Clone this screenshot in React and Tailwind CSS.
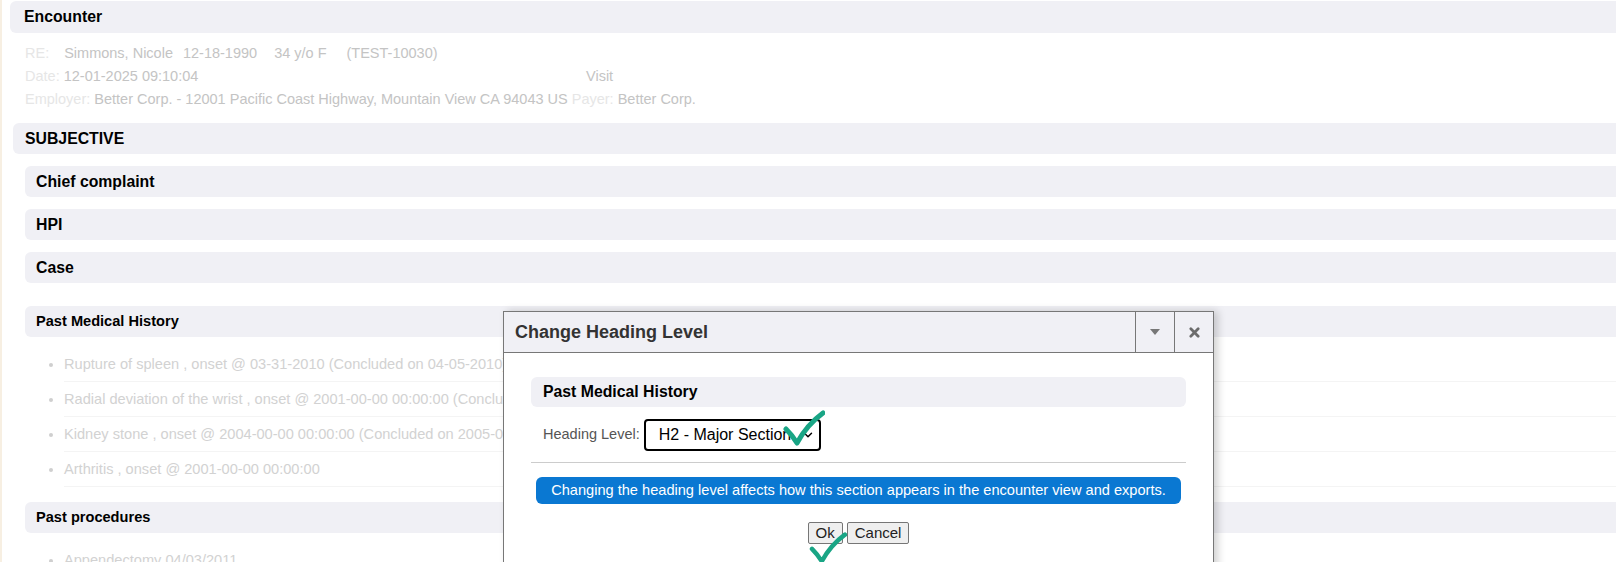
import { ChevronDown } from "lucide-react";

const pastHistory = [
  "Rupture of spleen , onset @ 03-31-2010 (Concluded on 04-05-2010)",
  "Radial deviation of the wrist , onset @ 2001-00-00 00:00:00 (Concluded on 2002-00-00 00:00:00)",
  "Kidney stone , onset @ 2004-00-00 00:00:00 (Concluded on 2005-00-00 00:00:00)",
  "Arthritis , onset @ 2001-00-00 00:00:00",
];

function Heading({ children, className = "" }) {
  return (
    <div
      className={`flex h-[31px] items-center rounded-l-md bg-[#f0f0f5] font-bold text-black ${className}`}
    >
      {children}
    </div>
  );
}

function Check({ className }) {
  return (
    <svg viewBox="0 0 42 36" className={className} fill="none">
      <path
        d="M3 19 C7 23 11 28 14 33 C20 22 29 11 40 3"
        stroke="#19a585"
        strokeWidth="5"
        strokeLinecap="round"
        strokeLinejoin="round"
      />
    </svg>
  );
}

function Dialog() {
  return (
    <div className="absolute left-[503px] top-[311px] h-[280px] w-[711px] border border-[#777] bg-white shadow-[4px_0_8px_rgba(0,0,0,0.18)]">
      <div className="flex h-[41px] items-stretch border-b border-[#777] bg-[#f0f0f5]">
        <div className="flex flex-1 items-center pl-[11px] text-[18px] font-bold text-[#333]">
          Change Heading Level
        </div>
        <div className="flex w-[39px] items-center justify-center border-l border-[#777]">
          <svg viewBox="0 0 10 6" className="h-[6px] w-[10px]">
            <path d="M0 0 H10 L5 6 Z" fill="#777" />
          </svg>
        </div>
        <div className="flex w-[39px] items-center justify-center border-l border-[#777]">
          <svg viewBox="0 0 12 12" className="h-[11px] w-[11px]">
            <path d="M2 2 L10 10 M10 2 L2 10" stroke="#6b6b6b" strokeWidth="3" strokeLinecap="round" />
          </svg>
        </div>
      </div>

      <div className="relative px-[27px] pt-[24px]">
        <div className="flex h-[30px] items-center rounded-md bg-[#f0f0f5] pl-3 text-[15.8px] font-bold text-black">
          Past Medical History
        </div>
        <div className="mt-[12px] flex items-center pl-3">
          <span className="text-[14.5px] text-[#555]">Heading Level:</span>
          <div className="ml-[4px] flex h-[32px] w-[177px] items-center justify-between rounded-[4px] border-2 border-black pl-[13px] pr-[4px] text-[16px] text-black">
            <span>H2 - Major Section</span>
            <ChevronDown size={14} strokeWidth={2.5} />
          </div>
        </div>
        <div className="mt-[11px] border-t border-[#ccc]" />
        <div className="mx-[5px] mt-[14px] flex h-[27px] items-center justify-center rounded-md bg-[#0a78d2] text-[14.6px] text-white">
          Changing the heading level affects how this section appears in the encounter view and exports.
        </div>
        <div className="mt-[18px] flex justify-center gap-[4px]">
          <button className="h-[22px] rounded-[2px] border border-[#767676] bg-[#efefef] px-[7px] text-[15px] leading-[20px] text-[#222]">
            Ok
          </button>
          <button className="h-[22px] rounded-[2px] border border-[#767676] bg-[#efefef] px-[7px] text-[15px] leading-[20px] text-[#222]">
            Cancel
          </button>
        </div>
        <Check className="absolute left-[279px] top-[57px] h-[36px] w-[42px]" />
        <Check className="absolute left-[305px] top-[179px] h-[32px] w-[38px]" />
      </div>
    </div>
  );
}

export default function App() {
  return (
    <div className="relative h-[562px] w-full overflow-hidden bg-white font-['Liberation_Sans',Arial,sans-serif]">
      <div className="h-full border-l-2 border-[#f7efe2] pl-2 pt-px">
        <div className="flex h-8 items-center rounded-l-md bg-[#f0f0f5] pl-[14px] text-[15.8px] font-bold text-black">
          Encounter
        </div>

        <div className="pl-[15px] pt-[9px] text-[14.5px] leading-[23px] text-[#c4c4c4]">
          <div>
            <span className="text-[#e6e6e6]">RE:</span>
            <span className="ml-[15px]">Simmons, Nicole</span>
            <span className="ml-[10px]">12-18-1990</span>
            <span className="ml-[17px]">34 y/o F</span>
            <span className="ml-5">(TEST-10030)</span>
          </div>
          <div className="flex">
            <div className="w-[561px]">
              <span className="text-[#e6e6e6]">Date:</span> 12-01-2025 09:10:04
            </div>
            <div>Visit</div>
          </div>
          <div>
            <span className="text-[#e6e6e6]">Employer:</span> Better Corp. - 12001 Pacific Coast Highway, Mountain View CA 94043 US{" "}
            <span className="text-[#e6e6e6]">Payer:</span> Better Corp.
          </div>
        </div>

        <Heading className="ml-[3px] mt-[12px] pl-3 text-[15.8px]">SUBJECTIVE</Heading>

        <div className="ml-[15px]">
          <Heading className="mt-3 pl-[11px] text-[15.8px]">Chief complaint</Heading>
          <Heading className="mt-3 pl-[11px] text-[15.8px]">HPI</Heading>
          <Heading className="mt-3 pl-[11px] text-[15.8px]">Case</Heading>
          <Heading className="mt-[23px] pl-[11px] text-[14.6px]">Past Medical History</Heading>
          <ul className="list-disc pl-[39px] pt-[10px] text-[14.6px] text-[#d2d2d2] marker:text-[#cfcfcf]">
            {pastHistory.map((item) => (
              <li key={item} className="h-[35px] border-b border-[#f4f4f4] leading-[35px]">
                {item}
              </li>
            ))}
          </ul>
          <Heading className="mt-[15px] pl-[11px] text-[14.6px]">Past procedures</Heading>
          <ul className="list-disc pl-[39px] pt-[10px] text-[14.6px] text-[#d2d2d2] marker:text-[#cfcfcf]">
            <li className="h-[35px] leading-[35px]">Appendectomy 04/03/2011</li>
          </ul>
        </div>
      </div>
      <Dialog />
    </div>
  );
}
